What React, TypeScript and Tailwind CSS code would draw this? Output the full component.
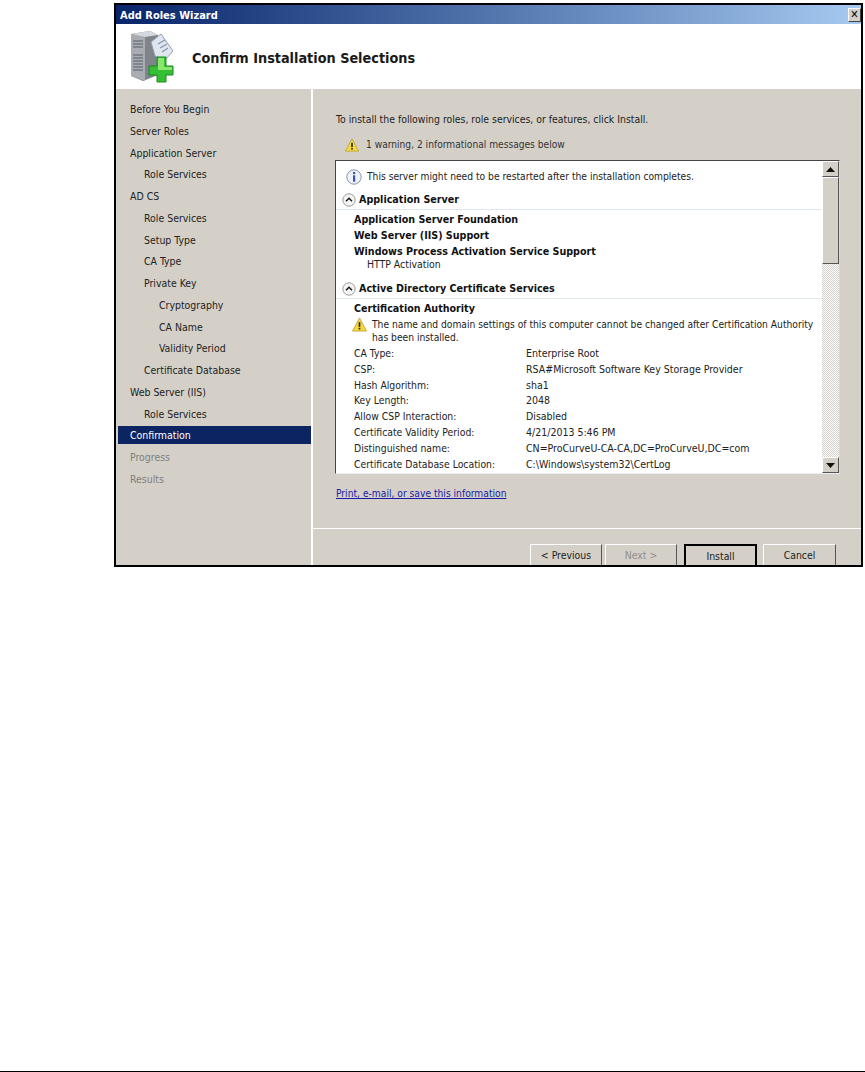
const F = "[font-family:'DejaVu_Sans_Condensed','Liberation_Sans',sans-serif]";

const nav: [string, number, string?][] = [
  ["Before You Begin", 0], ["Server Roles", 0], ["Application Server", 0], ["Role Services", 1],
  ["AD CS", 0], ["Role Services", 1], ["Setup Type", 1], ["CA Type", 1], ["Private Key", 1],
  ["Cryptography", 2], ["CA Name", 2], ["Validity Period", 2], ["Certificate Database", 1],
  ["Web Server (IIS)", 0], ["Role Services", 1], ["Confirmation", 0, "sel"], ["Progress", 0, "dis"], ["Results", 0, "dis"],
];

const details = [
  ["CA Type:", "Enterprise Root"],
  ["CSP:", "RSA#Microsoft Software Key Storage Provider"],
  ["Hash Algorithm:", "sha1"],
  ["Key Length:", "2048"],
  ["Allow CSP Interaction:", "Disabled"],
  ["Certificate Validity Period:", "4/21/2013 5:46 PM"],
  ["Distinguished name:", "CN=ProCurveU-CA-CA,DC=ProCurveU,DC=com"],
  ["Certificate Database Location:", "C:\\Windows\\system32\\CertLog"],
];

function Warn({ size = 16 }: { size?: number }) {
  return (
    <svg width={size} height={size} viewBox="0 0 16 16" className="shrink-0">
      <path d="M8 1 L15.5 15 H0.5 Z" fill="#f7d93c" stroke="#b59a2a" strokeWidth="0.8" strokeLinejoin="round" />
      <rect x="7.1" y="5.5" width="1.8" height="5" fill="#222" />
      <rect x="7.1" y="11.5" width="1.8" height="1.8" fill="#222" />
    </svg>
  );
}

function Chevron() {
  return (
    <svg width="14" height="14" viewBox="0 0 14 14" className="shrink-0">
      <circle cx="7" cy="7" r="6.2" fill="#f4f4f4" stroke="#9a9a9a" />
      <path d="M4 8.2 L7 5.2 L10 8.2" fill="none" stroke="#111" strokeWidth="1.4" />
    </svg>
  );
}

function Info() {
  return (
    <svg width="16" height="16" viewBox="0 0 16 16" className="shrink-0">
      <circle cx="8" cy="8" r="7.2" fill="#eef1f8" stroke="#8d94a8" />
      <rect x="7" y="3" width="2.2" height="2.2" fill="#3a55a8" />
      <rect x="7" y="6.3" width="2.2" height="6.4" fill="#3a55a8" />
    </svg>
  );
}

function ServerIcon() {
  return (
    <svg width="50" height="54" viewBox="0 0 50 54" className="-mt-[2px]">
      <path d="M2 5 L21 2 L29 6 L29 46 L14 52 L2 47 Z" fill="#7f838a" />
      <path d="M2 5 L16 8 L16 52 L2 47 Z" fill="#a9adb3" />
      <path d="M2 5 L21 2 L29 6 L16 8 Z" fill="#d5d8dc" />
      <path d="M4 12h10M4 15h10M4 18h10M4 26h10M4 29h10M4 32h10M4 35h10M4 38h10M4 41h10" stroke="#595d64" strokeWidth="1.2" />
      <path d="M22 13 L32 5 L44 22 L36 31 L26 27 Z" fill="#dfe6ee" stroke="#8fa0b4" />
      <path d="M29 15l7-4M31 19l7-4M33 23l6-4" stroke="#8494a8" strokeWidth="1.2" />
      <path d="M28 28h9v9h7v9h-7v7h-9v-7h-8v-9h8z" fill="#35bf35" stroke="#1d8a22" />
      <path d="M29 29h6v9h8v3h-14z" fill="#8ae66f" />
    </svg>
  );
}

function Btn({ label, dis, def, className }: { label: string; dis?: boolean; def?: boolean; className: string }) {
  return (
    <div
      className={`h-[21px] pt-[2px] flex items-center justify-center text-[10.4px] bg-[#d4d0c8] ${className} ${
        def ? "border-2 border-black border-b-0" : "border border-t-white border-l-white border-r-[#555] border-b-0"
      } ${dis ? "text-[#8f8f8f]" : "text-[#222]"}`}
    >
      {label}
    </div>
  );
}

export default function App() {
  return (
    <div className={`w-[865px] h-[1072px] bg-white flex flex-col ${F}`}>
      <div className="h-[3px] bg-white" />
      <div className="ml-[114px] w-[749px] h-[564px] border-2 border-black flex flex-col bg-white overflow-hidden">
        <div className="h-[19px] shrink-0 bg-gradient-to-r from-[#0a246a] to-[#a6caf0] flex items-center justify-between pl-[4px]">
          <span className="pt-[3px] text-[11px] font-bold text-white">Add Roles Wizard</span>
          <div className="w-[13px] h-[14px] bg-[#d4d0c8] border border-t-white border-l-white border-r-[#444] border-b-[#444] flex items-center justify-center text-[11px] leading-none font-bold text-black">✕</div>
        </div>
        <div className="h-[65px] shrink-0 flex items-center pl-[13px] bg-white">
          <ServerIcon />
          <h1 className="ml-[13px] mt-[4px] text-[14.3px] font-bold text-[#1a1a1a]">Confirm Installation Selections</h1>
        </div>
        <div className="flex-1 flex min-h-0 bg-[#d4d0c8]">
          <nav className="w-[197px] shrink-0 pt-[11px] pl-[2px] border-r-2 border-white flex flex-col gap-[3.75px]">
            {nav.map(([label, level, st], i) => (
              <div
                key={i}
                className={`h-[18px] pt-[2px] flex items-center text-[10.45px] ${
                  st === "sel" ? "bg-[#0c2461] text-white" : st === "dis" ? "text-[#7f7f7f]" : "text-[#222]"
                } ${level === 0 ? "pl-[12px]" : level === 1 ? "pl-[26px]" : "pl-[41px]"}`}
              >
                {label}
              </div>
            ))}
          </nav>
          <main className="flex-1 flex flex-col min-w-0">
            <div className="flex-1 flex flex-col pl-[22px] pr-[22px] pt-[23px] border-b border-white min-h-0">
              <p className="ml-px text-[10.4px] leading-[14px] text-[#222]">To install the following roles, role services, or features, click Install.</p>
              <div className="flex items-center gap-[7px] mt-[11px] ml-[10px] text-[10.15px] leading-[16px] text-[#333]">
                <Warn size={14} />
                1 warning, 2 informational messages below
              </div>
              <div className="mt-[7px] h-[314px] w-[505px] shrink-0 flex bg-white border border-t-[#444] border-l-[#444] border-r-[#d8d8d8] border-b-[#eee]">
                <div className="flex-1 min-w-0 overflow-hidden text-[10.4px] text-[#222]">
                  <div className="flex items-center gap-[5px] h-[16px] mt-[8px] ml-[10px] text-[10.2px]">
                    <Info />
                    This server might need to be restarted after the installation completes.
                  </div>
                  <div className="flex items-center gap-[3px] h-[16px] mt-[7px] ml-[6px] font-bold text-[10.65px] text-[#111]">
                    <Chevron />
                    Application Server
                  </div>
                  <div className="h-px bg-[#dde5f2] mt-px" />
                  <div className="pl-[18px] font-bold text-[10.65px] text-[#111]">
                    <div className="h-[16px] leading-[16px] mt-[2px]">Application Server Foundation</div>
                    <div className="h-[16px] leading-[16px]">Web Server (IIS) Support</div>
                    <div className="h-[16px] leading-[16px]">Windows Process Activation Service Support</div>
                  </div>
                  <div className="pl-[31px] h-[13px] leading-[13px] -mt-[2px]">HTTP Activation</div>
                  <div className="flex items-center gap-[3px] h-[16px] mt-[10px] ml-[6px] font-bold text-[10.65px] text-[#111]">
                    <Chevron />
                    Active Directory Certificate Services
                  </div>
                  <div className="h-px bg-[#dde5f2] mt-px" />
                  <div className="pl-[18px] font-bold text-[10.65px] text-[#111] h-[16px] leading-[16px] mt-[2px]">Certification Authority</div>
                  <div className="flex gap-[5px] pl-[16px]">
                    <Warn size={15} />
                    <div className="leading-[13px] whitespace-nowrap text-[10.2px] pt-[1px]">
                      The name and domain settings of this computer cannot be changed after Certification Authority
                      <br />
                      has been installed.
                    </div>
                  </div>
                  <div className="pl-[18px] mt-[2px]">
                    {details.map(([k, v]) => (
                      <div key={k} className="grid grid-cols-[172px_1fr] h-[15.8px] leading-[15.8px]">
                        <span className="text-[10.35px]">{k}</span>
                        <span className="text-[10.5px]">{v}</span>
                      </div>
                    ))}
                  </div>
                </div>
                <div className="w-[17px] shrink-0 flex flex-col bg-[repeating-conic-gradient(#d4d0c8_0%_25%,#ffffff_0%_50%)] bg-[length:2px_2px]">
                  <div className="h-[16px] bg-[#d4d0c8] border border-t-white border-l-white border-r-[#555] border-b-[#555] flex items-center justify-center">
                    <svg width="9" height="5" viewBox="0 0 9 5"><path d="M4.5 0 L9 5 H0 Z" fill="#111" /></svg>
                  </div>
                  <div className="h-[87px] bg-[#d4d0c8] border border-t-white border-l-white border-r-[#555] border-b-[#555]" />
                  <div className="flex-1" />
                  <div className="h-[16px] bg-[#d4d0c8] border border-t-white border-l-white border-r-[#555] border-b-[#555] flex items-center justify-center">
                    <svg width="9" height="5" viewBox="0 0 9 5"><path d="M0 0 H9 L4.5 5 Z" fill="#111" /></svg>
                  </div>
                </div>
              </div>
              <a className="ml-px mt-[13px] text-[10.2px] leading-[14px] text-[#1a1aa8] underline">Print, e-mail, or save this information</a>
            </div>
            <div className="h-[36px] shrink-0 flex items-end pl-[217px]">
              <Btn label="< Previous" className="w-[72px]" />
              <Btn label="Next >" dis className="w-[72px] ml-[3px]" />
              <Btn label="Install" def className="w-[73px] ml-[7px]" />
              <Btn label="Cancel" className="w-[73px] ml-[6px]" />
            </div>
          </main>
        </div>
      </div>
      <div className="flex-1" />
      <div className="h-px bg-black" />
    </div>
  );
}
